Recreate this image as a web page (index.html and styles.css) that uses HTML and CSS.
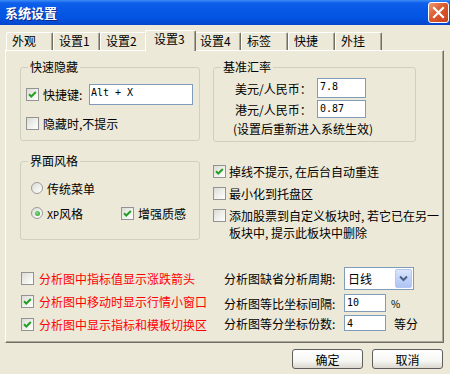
FILE: index.html
```html
<!DOCTYPE html>
<html lang="zh-CN">
<head>
<meta charset="utf-8">
<title>系统设置</title>
<link rel="stylesheet" href="styles.css">
</head>
<body>
<div class="titlebar">
  <span class="title">系统设置</span>
  <span class="close"><svg width="13" height="13" viewBox="0 0 13 13"><path d="M2 2 L11 11 M11 2 L2 11" stroke="#fff" stroke-width="2.2" stroke-linecap="square"/></svg></span>
</div>
<div class="tabs">
  <div class="tab">外观</div>
  <div class="tab">设置1</div>
  <div class="tab">设置2</div>
  <div class="tab active">设置3</div>
  <div class="tab">设置4</div>
  <div class="tab">标签</div>
  <div class="tab">快捷</div>
  <div class="tab">外挂</div>
</div>
<div class="panel">
  <div class="upper">
    <div class="col-left">
      <fieldset class="group g-hide">
        <legend>快速隐藏</legend>
        <div class="gbody">
          <div class="row r21">
            <span class="cb"><svg width="11" height="11" viewBox="0 0 11 11"><path d="M2 5.2 L4.3 7.5 L8.8 3" fill="none" stroke="#21A121" stroke-width="2"/></svg></span>
            <span class="hk-label">快捷键:</span>
            <span class="tb tb-hk">Alt + X</span>
          </div>
          <div class="row r21 mt8">
            <span class="cb"></span>
            <span class="lbl">隐藏时,不提示</span>
          </div>
        </div>
      </fieldset>
      <fieldset class="group g-style">
        <legend>界面风格</legend>
        <div class="gbody">
          <div class="row r20">
            <span class="rb"></span>
            <span class="lbl">传统菜单</span>
          </div>
          <div class="row r20 mt5">
            <span class="xp-item"><span class="rb on"></span><span class="lbl"><span class="mono">XP</span>风格</span></span>
            <span class="cb"><svg width="11" height="11" viewBox="0 0 11 11"><path d="M2 5.2 L4.3 7.5 L8.8 3" fill="none" stroke="#21A121" stroke-width="2"/></svg></span>
            <span class="lbl">增强质感</span>
          </div>
        </div>
      </fieldset>
    </div>
    <div class="col-right">
      <fieldset class="group g-rate">
        <legend>基准汇率</legend>
        <div class="gbody">
          <div class="rate-row h20">
            <span class="rate-label">美元/人民币：</span>
            <span class="tb tb-rate h20">7.8</span>
          </div>
          <div class="rate-row h18 mt2">
            <span class="rate-label">港元/人民币：</span>
            <span class="tb tb-rate h18">0.87</span>
          </div>
          <div class="note">(设置后重新进入系统生效)</div>
        </div>
      </fieldset>
      <div class="checks">
        <div class="chk-row">
          <span class="cb"><svg width="11" height="11" viewBox="0 0 11 11"><path d="M2 5.2 L4.3 7.5 L8.8 3" fill="none" stroke="#21A121" stroke-width="2"/></svg></span>
          <span class="chk-text">掉线不提示, 在后台自动重连</span>
        </div>
        <div class="chk-row">
          <span class="cb"></span>
          <span class="chk-text">最小化到托盘区</span>
        </div>
        <div class="chk-row">
          <span class="cb"></span>
          <span class="chk-text">添加股票到自定义板块时, 若它已在另一<br>板块中, 提示此板块中删除</span>
        </div>
      </div>
    </div>
  </div>
  <div class="lower">
    <div class="lower-left">
      <div class="red-row">
        <span class="cb"></span>
        <span class="red">分析图中指标值显示涨跌箭头</span>
      </div>
      <div class="red-row">
        <span class="cb"><svg width="11" height="11" viewBox="0 0 11 11"><path d="M2 5.2 L4.3 7.5 L8.8 3" fill="none" stroke="#21A121" stroke-width="2"/></svg></span>
        <span class="red">分析图中移动时显示行情小窗口</span>
      </div>
      <div class="red-row">
        <span class="cb"><svg width="11" height="11" viewBox="0 0 11 11"><path d="M2 5.2 L4.3 7.5 L8.8 3" fill="none" stroke="#21A121" stroke-width="2"/></svg></span>
        <span class="red">分析图中显示指标和模板切换区</span>
      </div>
    </div>
    <div class="lower-right">
      <div class="form-row h23">
        <span class="form-label">分析图缺省分析周期:</span>
        <span class="select">
          <span class="select-text">日线</span>
          <span class="select-btn"><svg width="9" height="7" viewBox="0 0 9 7"><path d="M1 1.5 L4.5 5 L8 1.5" fill="none" stroke="#4D6185" stroke-width="2"/></svg></span>
        </span>
      </div>
      <div class="form-row h18 mt4">
        <span class="form-label">分析图等比坐标间隔:</span>
        <span class="tb tb-small h18">10</span>
        <span class="unit-pct">%</span>
      </div>
      <div class="form-row h16 mt3">
        <span class="form-label">分析图等分坐标份数:</span>
        <span class="tb tb-small h16">4</span>
        <span class="unit">等分</span>
      </div>
    </div>
  </div>
</div>
<div class="buttons">
  <span class="btn">确定</span>
  <span class="btn">取消</span>
</div>
</body>
</html>
```
FILE: styles.css
```css
* { box-sizing: border-box; }
html, body { margin: 0; padding: 0; }
body {
  width: 450px;
  height: 374px;
  overflow: hidden;
  background: #ECE9D8;
  font-family: "Noto Sans CJK SC", "Liberation Sans", sans-serif;
  font-size: 12px;
  color: #000;
}

/* title bar */
.titlebar {
  height: 25px;
  display: flex;
  align-items: center;
  justify-content: space-between;
  padding: 0 1px 0 5px;
  background: linear-gradient(#3D8CF6 0, #0E5FEA 3px, #0758E6 10px, #0453E2 18px, #0346CC 25px);
}
.title {
  color: #fff;
  font-weight: bold;
  font-size: 13px;
  line-height: 15px;
  text-shadow: 1px 1px 0 #0A2A8F;
}
.close {
  width: 21px;
  height: 21px;
  border: 1px solid #fff;
  border-radius: 3px;
  background: linear-gradient(135deg, #EE9A78 0%, #DD5A2E 45%, #C8401A 100%);
  display: flex;
  align-items: center;
  justify-content: center;
}

/* tabs */
.tabs {
  height: 25px;
  display: flex;
  align-items: flex-end;
  padding-left: 6px;
}
.tab {
  width: 47px;
  height: 18px;
  border-top: 1px solid #fff;
  border-left: 1px solid #fff;
  border-right: 1px solid #716F64;
  box-shadow: inset -1px 0 #ACA899;
  border-radius: 2px 2px 0 0;
  padding-left: 5px;
  line-height: 16px;
  background: #ECE9D8;
}
.tab.active {
  width: 51px;
  height: 21px;
  margin: 0 -2px -1px;
  padding-left: 8px;
  position: relative;
  z-index: 1;
}

/* panel */
.panel {
  margin-left: 5px;
  width: 439px;
  height: 293px;
  border-top: 1px solid #fff;
  border-left: 1px solid #fff;
  border-right: 1px solid #716F64;
  border-bottom: 1px solid #716F64;
  box-shadow: inset -1px -1px #ACA899;
}
.upper {
  display: flex;
  gap: 13px;
  padding: 9px 0 0 14px;
  height: 190px;
}
.col-left { width: 180px; display: flex; flex-direction: column; }
.col-right { width: 203px; display: flex; flex-direction: column; }

.group {
  margin: 0;
  padding: 0;
  border: 1px solid #D0D0BF;
  border-radius: 3px;
  min-width: 0;
}
.group legend {
  margin-left: 7px;
  padding: 0 2px;
  line-height: 14px;
  font-size: 12px;
}
.g-hide { height: 81px; }
.g-hide .gbody { padding: 10px 0 0 5px; }
.g-style { height: 86px; margin-top: 13px; }
.g-style .gbody { padding: 10px 0 0 10px; }
.g-rate { height: 82px; }
.g-rate .gbody { padding: 4px 0 0 21px; }

.row { display: flex; align-items: center; }
.r21 { height: 21px; }
.r20 { height: 20px; }
.mt8 { margin-top: 8px; }
.mt5 { margin-top: 5px; }
.mt4 { margin-top: 4px; }
.mt3 { margin-top: 3px; }
.mt2 { margin-top: 2px; }
.h23 { height: 23px; }
.h20 { height: 20px; }
.h18 { height: 18px; }
.h16 { height: 16px; }

.lbl { margin-left: 4px; white-space: nowrap; }
.hk-label { width: 46px; margin-left: 4px; }
.xp-item { width: 90px; display: flex; align-items: center; }
.mono { font-family: "DejaVu Sans Mono", monospace; font-size: 10px; }

/* controls */
.cb {
  width: 13px;
  height: 13px;
  flex: none;
  border: 1px solid #939393;
  background: linear-gradient(135deg, #DCDCD6 0%, #F2F2EF 60%, #FFFFFF 100%);
  display: flex;
  align-items: center;
  justify-content: center;
}
.rb {
  width: 12px;
  height: 12px;
  flex: none;
  border: 1px solid #9A9A9A;
  border-radius: 50%;
  background: linear-gradient(135deg, #DCDCD6, #FFFFFF);
  display: flex;
  align-items: center;
  justify-content: center;
}
.rb.on::after {
  content: "";
  width: 5px;
  height: 5px;
  border-radius: 50%;
  background: radial-gradient(circle at 40% 40%, #7DDC7D, #21A121);
}
.tb {
  display: block;
  flex: none;
  background: #fff;
  border: 1px solid #7F9DB9;
  padding: 1px 0 0 2px;
  line-height: 14px;
  font-family: "DejaVu Sans Mono", monospace;
  font-size: 10px;
  white-space: pre;
}
.tb-hk { width: 104px; height: 21px; padding-left: 1px; }
.tb-rate { width: 49px; }
.tb-small { width: 42px; }

.rate-row { display: flex; align-items: center; }
.rate-label { width: 82px; white-space: nowrap; }
.note { margin: 4px 0 0 -2px; line-height: 14px; white-space: nowrap; }

.checks {
  margin-top: 21px;
  display: flex;
  flex-direction: column;
  gap: 5px;
}
.chk-row { display: flex; align-items: flex-start; }
.chk-row .cb { margin-top: 2px; }
.chk-text { margin-left: 3px; line-height: 17px; white-space: nowrap; }

/* lower area */
.lower {
  display: flex;
  margin-top: 26px;
  padding-left: 15px;
}
.lower-left {
  width: 203px;
  padding-top: 2px;
  display: flex;
  flex-direction: column;
  gap: 5px;
}
.red-row { height: 18px; display: flex; align-items: center; }
.red { color: #F00; margin-left: 5px; white-space: nowrap; }
.lower-right { display: flex; flex-direction: column; }
.form-row { display: flex; align-items: center; }
.form-label { width: 120px; white-space: nowrap; }
.select {
  width: 70px;
  height: 23px;
  background: #fff;
  border: 1px solid #7F9DB9;
  display: flex;
  align-items: center;
  justify-content: space-between;
  padding: 0 1px 0 3px;
}
.select-btn {
  width: 17px;
  height: 19px;
  border: 1px solid #B5C8F4;
  border-radius: 2px;
  background: linear-gradient(#DCE6FD, #C1D3FB 50%, #AFC4F4);
  display: flex;
  align-items: center;
  justify-content: center;
}
.unit-pct { margin-left: 5px; font-size: 10px; }
.unit { margin-left: 8px; }

/* buttons */
.buttons {
  display: flex;
  justify-content: flex-end;
  gap: 9px;
  padding-right: 7px;
  margin-top: 6px;
}
.btn {
  width: 71px;
  height: 20px;
  border: 1px solid #5E5E5E;
  border-radius: 3px;
  background: linear-gradient(#FFFFFF 0%, #F6F6F3 60%, #DCD8CE 100%);
  display: flex;
  align-items: center;
  justify-content: center;
}
```
